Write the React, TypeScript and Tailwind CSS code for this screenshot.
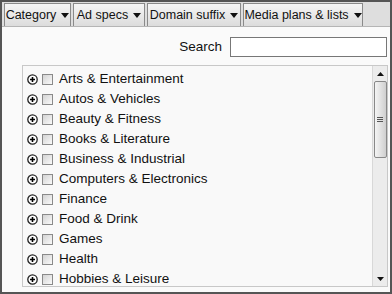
import React from 'react';

const tabs = [
  { label: 'Category', w: 'w-[67px]' },
  { label: 'Ad specs', w: 'w-[72px]' },
  { label: 'Domain suffix', w: 'w-[94px]' },
  { label: 'Media plans & lists', w: 'w-[120px]' },
];

const categories = [
  'Arts & Entertainment',
  'Autos & Vehicles',
  'Beauty & Fitness',
  'Books & Literature',
  'Business & Industrial',
  'Computers & Electronics',
  'Finance',
  'Food & Drink',
  'Games',
  'Health',
  'Hobbies & Leisure',
];

const Caret = () => (
  <svg width="8" height="5" viewBox="0 0 8 5" className="ml-[5px] shrink-0">
    <path d="M0 0h8L4 5z" fill="#111" />
  </svg>
);

const PlusIcon = () => (
  <svg width="11" height="11" viewBox="0 0 11 11">
    <circle cx="5.5" cy="5.5" r="4.7" fill="#fff" stroke="#222" strokeWidth="1.3" />
    <path d="M3 5.5h5M5.5 3v5" stroke="#000" strokeWidth="1.6" />
  </svg>
);

const App: React.FC = () => {
  return (
    <div
      className="w-[392px] h-[294px] border-2 border-[#555] bg-[#fafafa] flex flex-col overflow-hidden"
      style={{ fontFamily: '"Liberation Sans", Arial, sans-serif' }}
    >
      {/* toolbar */}
      <div className="h-[25px] shrink-0 bg-[#dedede] border-b border-[#b5b5b5] flex items-stretch gap-[2px] pl-[2px] pt-[1px]">
        {tabs.map(t => (
          <div
            key={t.label}
            className={`${t.w} flex items-center justify-center whitespace-nowrap border border-[#8a8a8a] border-b-0 bg-gradient-to-b from-[#f6f6f6] to-[#dcdcdc] text-[12.5px] text-[#111] leading-none`}
          >
            {t.label}
            <Caret />
          </div>
        ))}
      </div>

      {/* search */}
      <div className="flex items-center justify-end gap-[8px] pr-[3px] pt-[10px] pb-[8px]">
        <span className="text-[13.5px] text-[#111]">Search</span>
        <input className="w-[157px] h-[20px] border border-[#777] bg-white" />
      </div>

      {/* list */}
      <div className="ml-[20px] mr-[2px] flex-1 border border-[#c8c8c8] bg-[#f9f9f9] flex min-h-0">
        <div className="flex-1 pt-[3px] pl-[4px] flex flex-col">
          {categories.map(c => (
            <div key={c} className="h-[20px] flex items-center shrink-0">
              <PlusIcon />
              <span className="ml-[4px] w-[11px] h-[11px] border border-[#8a8a8a] bg-gradient-to-br from-[#d4d4d4] to-[#fafafa]" />
              <span className="ml-[6px] text-[13.5px] text-[#111]">{c}</span>
            </div>
          ))}
        </div>
        {/* scrollbar */}
        <div className="w-[15px] bg-[#ececec] border-l border-[#d8d8d8] flex flex-col items-center">
          <div className="h-[15px] flex items-center justify-center">
            <svg width="7" height="4" viewBox="0 0 7 4"><path d="M0 4h7L3.5 0z" fill="#111" /></svg>
          </div>
          <div className="w-[13px] h-[77px] border border-[#888] rounded-[2px] bg-gradient-to-r from-[#f4f4f4] via-[#e2e2e2] to-[#cfcfcf] flex flex-col items-center justify-center gap-[1px]">
            <div className="w-[6px] h-px bg-[#555]" />
            <div className="w-[6px] h-px bg-[#555]" />
            <div className="w-[6px] h-px bg-[#555]" />
          </div>
          <div className="flex-1" />
          <div className="h-[15px] flex items-center justify-center">
            <svg width="7" height="4" viewBox="0 0 7 4"><path d="M0 0h7L3.5 4z" fill="#111" /></svg>
          </div>
        </div>
      </div>
      <div className="h-[5px] shrink-0" />
    </div>
  );
};

export default App;
